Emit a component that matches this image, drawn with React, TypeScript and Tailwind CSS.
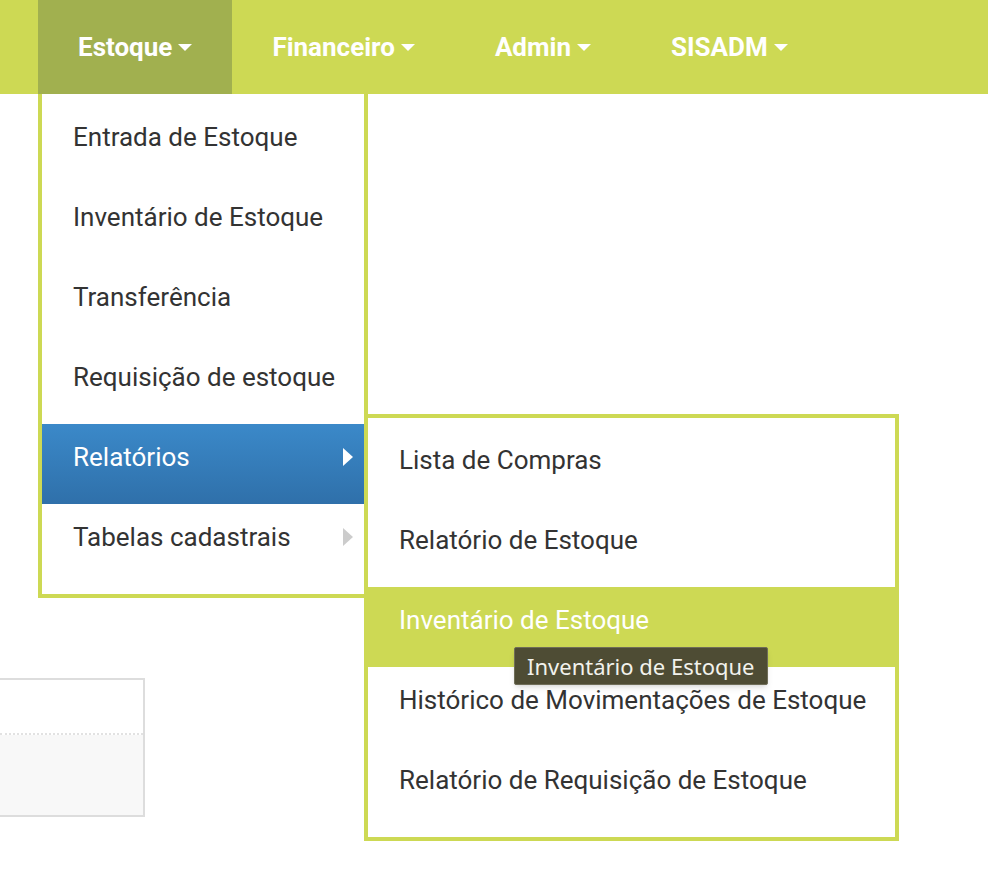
import { useState } from 'react';

const navItems = ['Estoque', 'Financeiro', 'Admin', 'SISADM'];

const estoqueItems = [
  { label: 'Entrada de Estoque' },
  { label: 'Inventário de Estoque' },
  { label: 'Transferência' },
  { label: 'Requisição de estoque' },
  { label: 'Relatórios', sub: true },
  { label: 'Tabelas cadastrais', sub: true },
];

const relatorios = [
  'Lista de Compras',
  'Relatório de Estoque',
  'Inventário de Estoque',
  'Histórico de Movimentações de Estoque',
  'Relatório de Requisição de Estoque',
];

function Caret() {
  return (
    <span className="ml-[6px] inline-block h-0 w-0 border-x-[7px] border-t-[7px] border-x-transparent border-t-white" />
  );
}

function SubMenu() {
  const [hover] = useState(2);
  return (
    <div className="absolute left-full top-[-10px] z-20 w-[535px] border-4 border-[#cdd954] bg-white pt-[9px] pb-[10px]">
      {relatorios.map((label, i) => (
        <div
          key={label}
          className={`relative -ml-1 h-[80px] pl-[35px] pt-[18px] text-[26px] leading-[30px] ${
            i === hover ? 'bg-[#cdd954] text-white' : 'text-[#333]'
          }`}
        >
          {label}
          {i === hover && (
            <div className="absolute left-[150px] top-[60px] z-30 whitespace-nowrap rounded-[2px] border border-[#6f6d58] bg-[#4e4c34] px-[12px] py-[5px] text-[22px] leading-[26px] text-[#f2f2ec] shadow-md [font-family:'Noto_Sans','Liberation_Sans',sans-serif]">
              Inventário de Estoque
            </div>
          )}
        </div>
      ))}
    </div>
  );
}

function EstoqueMenu() {
  return (
    <div className="absolute left-0 top-full z-10 w-[330px] border-x-4 border-b-4 border-[#cdd954] bg-white py-[10px] font-normal">
      {estoqueItems.map((item) => {
        const active = item.label === 'Relatórios';
        return (
          <div
            key={item.label}
            className={`relative flex h-[80px] items-start justify-between pl-[31px] pr-[11px] pt-[18px] text-[26px] leading-[30px] ${
              active ? 'bg-gradient-to-b from-[#3b89c9] to-[#2f70aa] text-white' : 'text-[#333]'
            }`}
          >
            <span>{item.label}</span>
            {item.sub && (
              <span
                className={`mt-[6px] inline-block h-0 w-0 border-y-[9px] border-l-[10px] border-y-transparent ${
                  active ? 'border-l-white' : 'border-l-[#cccccc]'
                }`}
              />
            )}
            {active && <SubMenu />}
          </div>
        );
      })}
    </div>
  );
}

export default function App() {
  return (
    <div className="relative min-h-[870px] bg-white [font-family:Roboto,'Noto_Sans',sans-serif]">
      <nav className="flex h-[94px] bg-[#cdd954] pl-[38px]">
        {navItems.map((name) => (
          <div
            key={name}
            className={`relative flex items-center px-[40px] text-[26px] font-bold text-white ${
              name === 'Estoque' ? 'bg-[#a1b04f]' : ''
            }`}
          >
            <span className="flex items-center">
              {name}
              <Caret />
            </span>
            {name === 'Estoque' && <EstoqueMenu />}
          </div>
        ))}
      </nav>

      {/* page content under the menu */}
      <div className="mt-[584px] w-[145px] border-y-2 border-r-2 border-[#dddddd]">
        <div className="h-[55px] border-b-2 border-dotted border-[#e2e2e2] bg-white" />
        <div className="h-[80px] bg-[#f8f8f8]" />
      </div>
    </div>
  );
}
